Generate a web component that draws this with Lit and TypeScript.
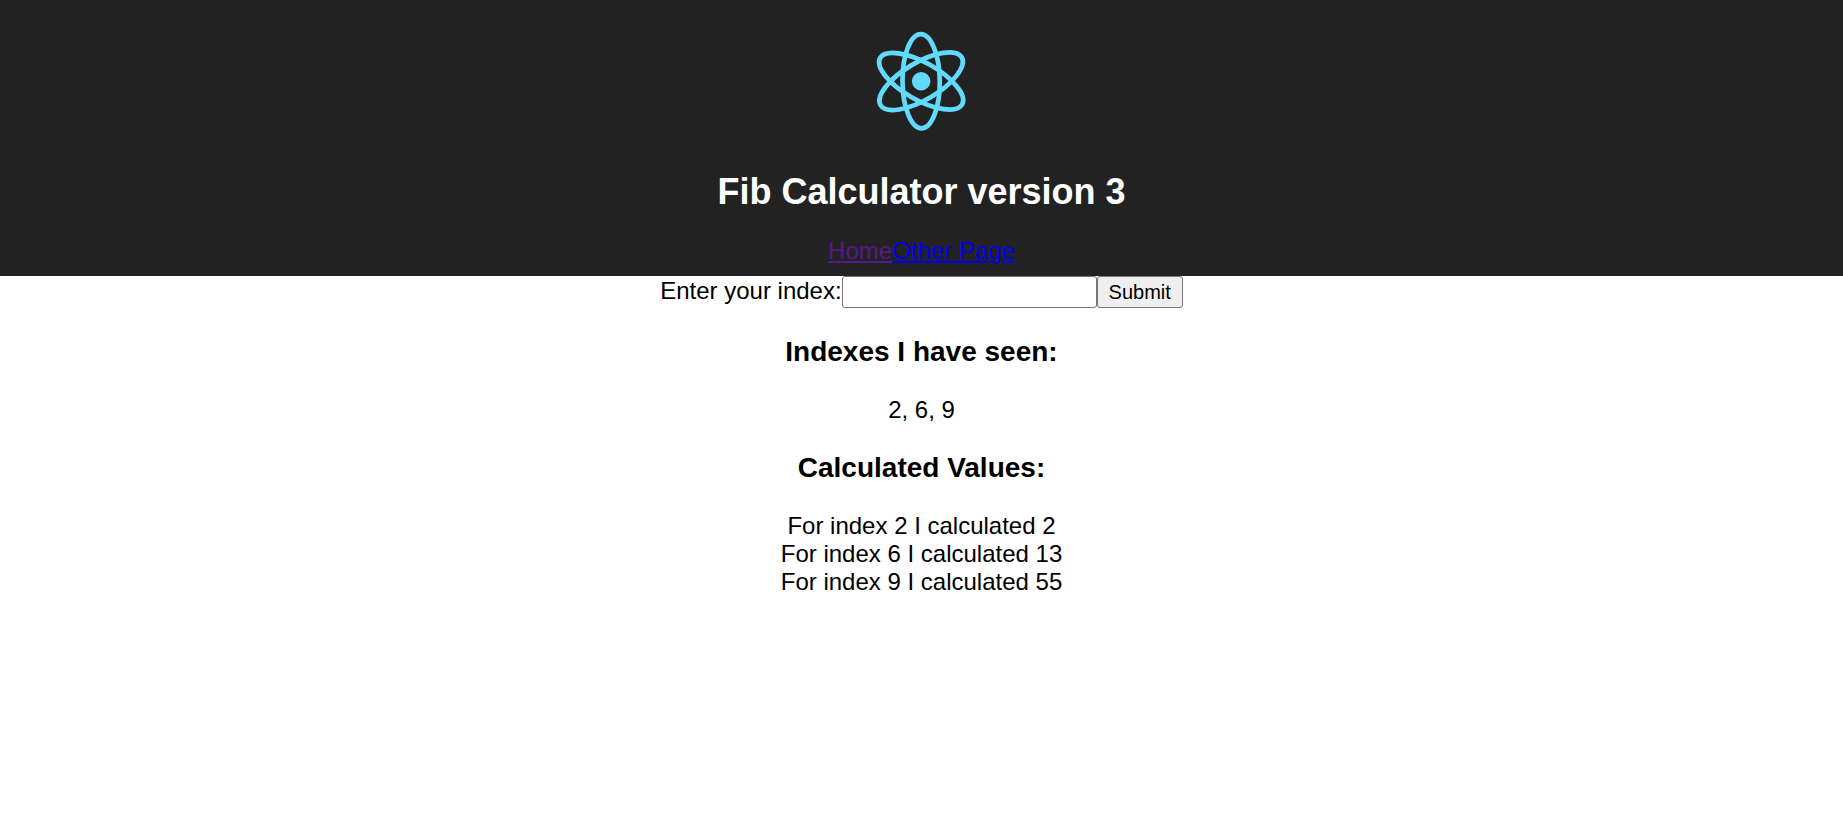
import { LitElement, html, css } from "lit";
import { customElement, state } from "lit/decorators.js";

@customElement("app-root")
export class AppRoot extends LitElement {
  static styles = css`
    :host {
      display: block;
      font-family: "Liberation Sans", Arial, sans-serif;
      font-size: 24px;
      line-height: 28px;
      color: #000;
      text-align: center;
    }
    .header {
      display: flex;
      flex-direction: column;
      align-items: center;
      padding: 21px 20px 11px;
      background: #222;
      color: #fff;
    }
    .logo {
      display: block;
      height: 120px;
    }
    .title {
      margin: 30px 0 25px;
      font-size: 36px;
      line-height: 41px;
    }
    .nav {
      display: flex;
    }
    .link {
      color: #0000ee;
    }
    .visited {
      color: #551a8b;
    }
    .form {
      display: flex;
      justify-content: center;
      align-items: baseline;
    }
    .input,
    .submit {
      box-sizing: border-box;
      height: 32px;
      margin: 0;
      border: 1px solid #767676;
      border-radius: 3px;
      font-family: inherit;
      font-size: 20px;
    }
    .input {
      width: 255px;
      padding: 1px 2px;
      background: #fff;
    }
    .submit {
      padding: 1px 11px;
      background: #efefef;
      color: #000;
    }
    .heading {
      margin: 28px 0;
      font-size: 28px;
      line-height: 32px;
    }
  `;

  @state() private seen = [2, 6, 9];
  @state() private values: Record<number, number> = { 2: 2, 6: 13, 9: 55 };

  private onSubmit(event: Event) {
    event.preventDefault();
  }

  render() {
    return html`
      <header class="header">
        <svg class="logo" viewBox="-13.8 -14.05 28 28" fill="none" stroke="#61dafb" aria-hidden="true">
          <circle r="2.15" fill="#61dafb" stroke="none" />
          <g stroke-width="1.1" transform="rotate(-0.5)">
            <ellipse rx="4.35" ry="11" />
            <ellipse rx="4.35" ry="11" transform="rotate(60)" />
            <ellipse rx="4.35" ry="11" transform="rotate(120)" />
          </g>
        </svg>
        <h1 class="title">Fib Calculator version 3</h1>
        <nav class="nav"><a class="link visited" href="#/">Home</a><a class="link" href="#/otherpage">Other Page</a></nav>
      </header>
      <main>
        <form class="form" @submit=${this.onSubmit}>
          <label for="index">Enter your index:</label>
          <input class="input" id="index" type="text" />
          <button class="submit" type="submit">Submit</button>
        </form>
        <h3 class="heading">Indexes I have seen:</h3>
        <div>${this.seen.join(", ")}</div>
        <h3 class="heading">Calculated Values:</h3>
        ${this.seen.map((i) => html`<div>For index ${i} I calculated ${this.values[i]}</div>`)}
      </main>
    `;
  }
}
